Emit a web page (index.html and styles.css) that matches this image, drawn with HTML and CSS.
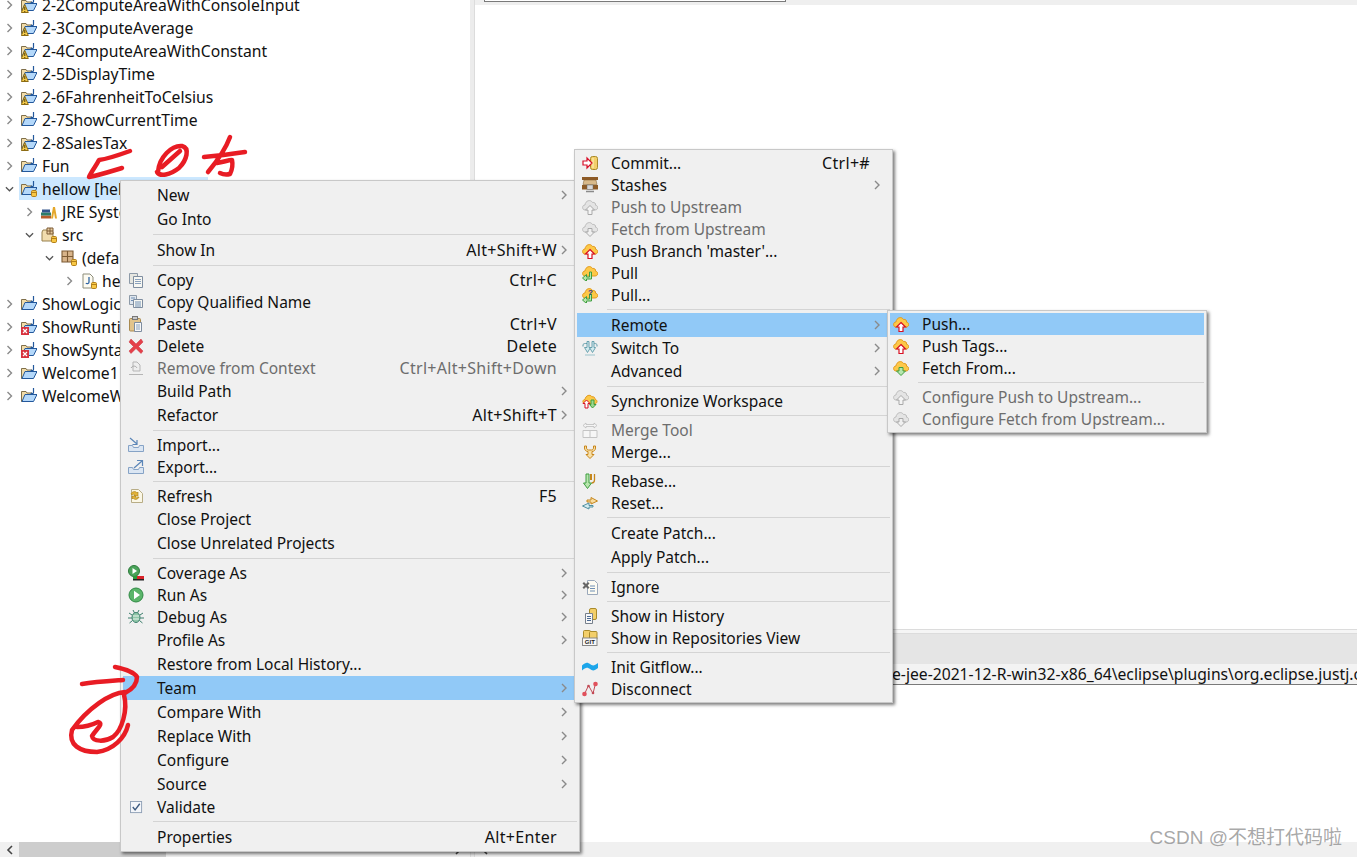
FILE: index.html
```html
<!DOCTYPE html>
<html lang="en">
<head>
<meta charset="utf-8">
<title>Eclipse Team menu</title>
<link rel="stylesheet" href="styles.css">
</head>
<body>
<svg class="sprite" width="0" height="0">
  <defs>
    <symbol id="chev-r" viewBox="0 0 8 10"><path d="M2 1l4 4-4 4" fill="none" stroke="#8a8a8a" stroke-width="1.4"/></symbol>
    <symbol id="chev-d" viewBox="0 0 10 8"><path d="M1 2l4 4 4-4" fill="none" stroke="#555" stroke-width="1.4"/></symbol>
    <symbol id="chev-k" viewBox="0 0 8 10"><path d="M6 1 2 5l4 4" fill="none" stroke="#444" stroke-width="1.6"/></symbol>
    <symbol id="chev-kr" viewBox="0 0 8 10"><path d="M2 1l4 4-4 4" fill="none" stroke="#444" stroke-width="1.6"/></symbol>
    <symbol id="proj" viewBox="0 0 16 16">
      <path d="M.5 3.500V13.500H11V5H6L5 3.500z" fill="#f2dca8" stroke="#7f6f4a"/>
      <path d="M1 13.500 4 6.500H16L12.500 13.500z" fill="#b4d8fa" stroke="#23589c"/>
      <path d="M12.500 0v4.500c0 1.300-2 1.300-2.800.5" fill="none" stroke="#23589c" stroke-width="1.200"/>
    </symbol>
    <symbol id="warn" viewBox="0 0 16 16"><path d="M.3 15.500 3.800 7.500 7.300 15.500z" fill="#f6cc4c" stroke="#8d6c14"/><path d="M3.800 10v3M3.800 14v1" stroke="#4a3a08"/></symbol>
    <symbol id="err" viewBox="0 0 16 16"><rect x="0" y="8" width="8" height="8" fill="#d8333f"/><path d="M2 10l4 4M6 10l-4 4" stroke="#fff" stroke-width="1.2"/></symbol>
    <symbol id="repo" viewBox="0 0 16 16"><rect x="10.500" y="9.500" width="5" height="6" rx="1.200" fill="#f8c846" stroke="#b3801a"/><path d="M10.500 11.500h5" stroke="#b3801a"/></symbol>
    <symbol id="jre" viewBox="0 0 16 16"><rect x="0" y="11.500" width="10" height="3" fill="#b65c2c"/><rect x="0" y="8.500" width="10" height="3" fill="#2d7d6a"/><rect x="1" y="5.500" width="8" height="3" fill="#33558c"/><path d="M10 14.500 12 3h2l2 11.500h-2l-1-6-1 6z" fill="#e4a72a"/></symbol>
    <symbol id="srcf" viewBox="0 0 16 16"><path d="M1 5v9h11V5H7L6 3H2z" fill="#f1dcae" stroke="#98814f"/><path d="M6 1h6v6H6zM9 1v6M6 4h6" fill="#e8cda0" stroke="#7d5b34"/></symbol>
    <symbol id="pkg" viewBox="0 0 16 16"><path d="M1 1h11v11H1zM6.500 1v11M1 6.500h11" fill="#d8b48a" stroke="#7d5b34" stroke-width="1.1"/></symbol>
    <symbol id="jfile" viewBox="0 0 16 16"><path d="M2 1h7l3 3v11H2z" fill="#fdfbf2" stroke="#8d8d7a"/><path d="M8 4v5c0 2-2.500 2-3 1" fill="none" stroke="#2f64a3" stroke-width="1.3"/></symbol>

    <symbol id="copy" viewBox="0 0 16 16"><path d="M1.500 1.500h8v10h-8z" fill="#e6e6e0" stroke="#8d9aa8"/><path d="M5.500 4.500h9v11h-9z" fill="#f7f7f2" stroke="#7e8da0"/><path d="M7 7.500h6M7 9.500h6M7 11.500h6" stroke="#8aa1bd"/></symbol>
    <symbol id="copyq" viewBox="0 0 16 16"><path d="M1.500 1.500h7v9h-7z" fill="#dfe6ee" stroke="#8d9aa8"/><path d="M5.500 5.500h9v8h-9z" fill="#f7f7f2" stroke="#7e8da0"/><path d="M3 4h4M3 6.500h2M7 8h6M7 10h6M7 12h6" stroke="#6f8fb5"/></symbol>
    <symbol id="paste" viewBox="0 0 16 16"><rect x="1.500" y="2.500" width="11" height="12.500" rx="1" fill="#e2c48c" stroke="#a98a50"/><rect x="4.500" y=".5" width="5" height="3" fill="#c9c9c9" stroke="#777"/><path d="M6.500 6.500h7v9h-7z" fill="#f8f8f8" stroke="#7e8da0"/><path d="M8 9h4M8 11h4M8 13h4" stroke="#8aa1bd"/></symbol>
    <symbol id="del" viewBox="0 0 16 16"><path d="M3 1 8 6l5-5 2 3-4.500 4.500L15 13l-2 2.500-5-5-5 5L1 13l4.500-4.500L1 4z" fill="#e5404a" stroke="#c9303c" stroke-width=".5"/></symbol>
    <symbol id="rmctx" viewBox="0 0 16 16"><path d="M1 14.500h14" stroke="#b5b5b5"/><path d="M5 2h4l3 3v6H5z" fill="#eee" stroke="#b5b5b5"/><path d="M3 8c2-3 5-2 6 0" fill="none" stroke="#a8a8a8"/></symbol>
    <symbol id="imp" viewBox="0 0 16 16"><path d="M.5 8.500h4l1 2h5l1-2h4v6H.5z" fill="#dbe6f3" stroke="#86a3c6"/><path d="M2 1l7 6M9 3v4.500H4.500" fill="none" stroke="#5b86b8" stroke-width="1.2"/></symbol>
    <symbol id="exp" viewBox="0 0 16 16"><path d="M.5 8.500h4l1 2h5l1-2h4v6H.5z" fill="#dbe6f3" stroke="#86a3c6"/><path d="M6 9l8-7M9 1.500h5.500V7" fill="none" stroke="#5b86b8" stroke-width="1.2"/></symbol>
    <symbol id="refresh" viewBox="0 0 16 16"><path d="M3.500 1.500h7l4 4v9h-11z" fill="#fbf7e6" stroke="#b8ad86"/><path d="M3 6c1-3 5-3 6-1l1-1v4H6l1-1c-1-1-2-1-3 0z" fill="#e3b338" stroke="#a67d14" stroke-width=".6"/><path d="M11 9c-1 3-5 3-6 1l-1 1V8h4l-1 1c1 1 2 1 3 0z" fill="#e3b338" stroke="#a67d14" stroke-width=".6"/></symbol>
    <symbol id="cover" viewBox="0 0 16 16"><circle cx="6" cy="6" r="5.500" fill="#4aa35a" stroke="#2c7a3b"/><path d="M4.500 3v6l4.500-3z" fill="#fff"/><rect x="9" y="11" width="7" height="4" fill="#d8232a"/><rect x="5" y="11" width="4" height="4" fill="#2c9a3b"/><rect x="5" y="14" width="11" height="1.500" fill="#222"/></symbol>
    <symbol id="run" viewBox="0 0 16 16"><circle cx="8" cy="8" r="7" fill="#5bb56a" stroke="#2f8a44"/><path d="M6 3.800v8.400L12 8z" fill="#fff"/></symbol>
    <symbol id="debug" viewBox="0 0 16 16"><ellipse cx="8" cy="8.500" rx="4" ry="5" fill="#8fc7a8" stroke="#3c7f6c"/><path d="M1 4l3 2M15 4l-3 2M0 9h4M16 9h-4M1.500 14l3-2.500M14.500 14l-3-2.500M5 1l1.500 3M11 1 9.500 4" stroke="#3c7f6c"/><path d="M5 7h6M5 10h6" stroke="#e8f2ec"/></symbol>
    <symbol id="check" viewBox="0 0 14 14"><rect x=".5" y=".5" width="12" height="12" fill="#f4f6fa" stroke="#8f9fb5"/><path d="M3 6.500 5.500 9.500 10.500 3" fill="none" stroke="#3d5a80" stroke-width="1.500"/></symbol>

    <symbol id="commit" viewBox="0 0 16 16"><rect x="8.500" y="1.500" width="7" height="13" rx="2" fill="#f3cf6a" stroke="#a98a2a"/><path d="M11 3v10" stroke="#fff3c0"/><path d="M1 6h4V3l5 5-5 5v-3H1z" fill="#fff" stroke="#d8102a" stroke-width="1.200"/></symbol>
    <symbol id="stash" viewBox="0 0 16 16"><path d="M0 0h16v3H0z" fill="#8d5a26"/><path d="M2 3h12l1 4.500H1z" fill="#d8b98a" stroke="#7d5a2a" stroke-width=".5"/><path d="M0 8h16v4.500H0z" fill="#8d5a26"/><rect x="5" y="8" width="6" height="4.500" fill="#d8d8d8" stroke="#666" stroke-width=".5"/><path d="M4 14.500h8" stroke="#8a8a8a" stroke-width="1.500"/></symbol>
    <symbol id="cloud" viewBox="0 0 16 16"><path d="M3 11C-.2 11-.2 6 3 6 3.500 1.500 8.500 0 10.500 3.500 12.500 3 14 4.500 13.500 6.200 16.500 6.500 16.500 11 13 11z" fill="#fdc848" stroke="#e39a1c"/></symbol>
    <symbol id="cloudg" viewBox="0 0 16 16"><path d="M3 11C-.2 11-.2 6 3 6 3.500 1.500 8.500 0 10.500 3.500 12.500 3 14 4.500 13.500 6.200 16.500 6.500 16.500 11 13 11z" fill="#e4e4e4" stroke="#bdbdbd"/></symbol>
    <symbol id="upr" viewBox="0 0 16 16"><path d="M8 6.500 12.500 11H10v4.500H6V11H3.500z" fill="#fff" stroke="#d70f22" stroke-width="1.200"/></symbol>
    <symbol id="upg" viewBox="0 0 16 16"><path d="M8 6.500 12.500 11H10v4.500H6V11H3.500z" fill="#f4f4f4" stroke="#a9a9a9"/></symbol>
    <symbol id="dng" viewBox="0 0 16 16"><path d="M6 7.500h4V11h2.500L8 15.500 3.500 11H6z" fill="#b8e6ae" stroke="#3f9e40"/></symbol>
    <symbol id="dnx" viewBox="0 0 16 16"><path d="M6 7.500h4V11h2.500L8 15.500 3.500 11H6z" fill="#f0f0f0" stroke="#a9a9a9"/></symbol>
    <symbol id="pull" viewBox="0 0 16 16"><path d="M7.500 7v5H4.500V9.500L.5 13l4 3.500V14H9.500V7z" fill="#b8e6ae" stroke="#3f9e40"/></symbol>
    <symbol id="qm" viewBox="0 0 16 16"><text x="8.500" y="7.500" class="qtext">?</text></symbol>
    <symbol id="switch" viewBox="0 0 16 16"><path d="M5 1.500h2v6h1.500L5.500 12.500 2.500 7.500H5z" fill="#d5ecf0" stroke="#5f9aa8" stroke-width=".9"/><path d="M10 1.500h2v6h1.500l-3 5-3-5H10z" fill="#d5ecf0" stroke="#5f9aa8" stroke-width=".9"/><path d="M1 6.500V5C1 4 2 3.500 3.500 3.500H5M15 6.500V5c0-1-1-1.500-2.500-1.500H12" fill="none" stroke="#5f9aa8"/><path d="M3 15h10" stroke="#9cc4cc"/></symbol>
    <symbol id="sync" viewBox="0 0 16 16"><path d="M3 10.500C.2 10.500.2 6.500 3 6.500 3.500 2.500 8 .8 10 3.800c2-.5 3.300 1 3 2.700 2.700 0 2.700 4 0 4z" fill="#fdc848" stroke="#e39a1c"/><path d="M4.500 7 8 10.500H6V15H3v-4.500H1z" fill="#fff" stroke="#d70f22"/><path d="M9 7h3v4.500h2L10.500 15 7.500 11.500H9z" fill="#9bd890" stroke="#3f9e40"/></symbol>
    <symbol id="mtool" viewBox="0 0 16 16"><path d="M1 8.500h14v7H1zM8 8.500v7" fill="#f6f6f6" stroke="#c4c4c4"/><path d="M1 3.500 4 1v1.500h8V1l3 2.500L12 6V4.500H4V6z" fill="#f4f4f4" stroke="#bcbcbc" stroke-width=".8"/></symbol>
    <symbol id="merge" viewBox="0 0 16 16"><path d="M2.500 2h2v2c0 1 1 2 2 2h3c1 0 2-1 2-2V2h2v2c0 2-1.500 3.500-3.500 3.500v3H12L8 14.500 4 10.500h2V7.500C4 7.500 2.500 6 2.500 4z" fill="#f8e0a8" stroke="#c8861a"/></symbol>
    <symbol id="rebase" viewBox="0 0 16 16"><path d="M9 1v6" stroke="#c5861c" stroke-width="2"/><path d="M12.500 1v6c0 2.500-1.500 3-3 3" fill="none" stroke="#c5861c" stroke-width="1.300"/><path d="M4 1h3v9h2.500L5.500 15.500 1.500 10H4z" fill="#b8e6ae" stroke="#3f9e40"/></symbol>
    <symbol id="reset" viewBox="0 0 16 16"><path d="M9 5V2.500L15.500 6 9 9V7H5V5z" fill="#f8dca0" stroke="#c5861c"/><path d="M7 8v2.500h4V12H7v2L.5 11 7 8z" fill="#d5ecf0" stroke="#4f8fa0"/></symbol>
    <symbol id="ignore" viewBox="0 0 16 16"><path d="M5.500 1.500h7l3 3v11h-10z" fill="#fdfbf2" stroke="#9aa8bb"/><path d="M8 7h5M8 9.500h5M8 12h5" stroke="#6f8fb5"/><path d="M2 3l2 2 2-2 1.500 1.500-2 2 2 2L6 10 4 8l-2 2L.5 8.500l2-2-2-2z" fill="#666"/></symbol>
    <symbol id="hist" viewBox="0 0 16 16"><rect x="7.500" y=".5" width="7" height="11" rx="1.500" fill="#f3cf6a" stroke="#a98a2a"/><path d="M3.500 5.500h7v10h-7z" fill="#f8f8f8" stroke="#77808c"/><path d="M5 8.500h4M5 10.500h4M5 12.500h4" stroke="#4c6a94"/></symbol>
    <symbol id="gitv" viewBox="0 0 16 16"><rect x="1.500" y=".5" width="7" height="8" rx="1" fill="#f3cf6a" stroke="#a98a2a"/><rect x="7.500" y="1.500" width="7.500" height="8" rx="1" fill="#f3cf6a" stroke="#a98a2a"/><rect x=".5" y="8" width="14.500" height="7.500" fill="#f8f8f8" stroke="#888"/><text x="7.800" y="14.300" class="gittext">GIT</text></symbol>
    <symbol id="flow" viewBox="0 0 16 16"><path d="M0 11.500V6.500c4-4 6-3 8-1.500s4 2.500 8-1v5c-4 3.500-6 2.500-8 1S4 7.500 0 11.500z" fill="#1da6ea"/></symbol>
    <symbol id="disc" viewBox="0 0 16 16"><path d="M2.500 13 6.500 4.500l4.500 8 2.500-10" fill="none" stroke="#c24a55"/><circle cx="2.500" cy="13" r="2.300" fill="#e1515c"/><circle cx="13.500" cy="3" r="2.300" fill="#e1515c"/><circle cx="6.500" cy="5" r="1.300" fill="#c24a55"/><circle cx="11" cy="12" r="1.300" fill="#c24a55"/></symbol>
  </defs>
</svg>

<div class="app">
  <div class="workspace">
    <div class="navigator">
      <ul class="tree">
        <li class="node"><svg class="twist"><use href="#chev-r"/></svg><svg class="ti"><use href="#proj"/><use href="#warn"/></svg><span>2-2ComputeAreaWithConsoleInput</span></li>
        <li class="node"><svg class="twist"><use href="#chev-r"/></svg><svg class="ti"><use href="#proj"/><use href="#warn"/></svg><span>2-3ComputeAverage</span></li>
        <li class="node"><svg class="twist"><use href="#chev-r"/></svg><svg class="ti"><use href="#proj"/><use href="#warn"/></svg><span>2-4ComputeAreaWithConstant</span></li>
        <li class="node"><svg class="twist"><use href="#chev-r"/></svg><svg class="ti"><use href="#proj"/><use href="#warn"/></svg><span>2-5DisplayTime</span></li>
        <li class="node"><svg class="twist"><use href="#chev-r"/></svg><svg class="ti"><use href="#proj"/><use href="#warn"/></svg><span>2-6FahrenheitToCelsius</span></li>
        <li class="node"><svg class="twist"><use href="#chev-r"/></svg><svg class="ti"><use href="#proj"/></svg><span>2-7ShowCurrentTime</span></li>
        <li class="node"><svg class="twist"><use href="#chev-r"/></svg><svg class="ti"><use href="#proj"/><use href="#warn"/></svg><span>2-8SalesTax</span></li>
        <li class="node"><svg class="twist"><use href="#chev-r"/></svg><svg class="ti"><use href="#proj"/></svg><span>Fun</span></li>
        <li class="node selected"><svg class="twist"><use href="#chev-d"/></svg><svg class="ti"><use href="#proj"/><use href="#repo"/></svg><span>hellow [hellow master]</span></li>
        <li class="node lv1"><svg class="twist"><use href="#chev-r"/></svg><svg class="ti"><use href="#jre"/></svg><span>JRE System Library</span></li>
        <li class="node lv1"><svg class="twist"><use href="#chev-d"/></svg><svg class="ti"><use href="#srcf"/><use href="#repo"/></svg><span>src</span></li>
        <li class="node lv2"><svg class="twist"><use href="#chev-d"/></svg><svg class="ti"><use href="#pkg"/><use href="#repo"/></svg><span>(default package)</span></li>
        <li class="node lv3"><svg class="twist"><use href="#chev-r"/></svg><svg class="ti"><use href="#jfile"/><use href="#repo"/></svg><span>hellow.java</span></li>
        <li class="node"><svg class="twist"><use href="#chev-r"/></svg><svg class="ti"><use href="#proj"/></svg><span>ShowLogicError</span></li>
        <li class="node"><svg class="twist"><use href="#chev-r"/></svg><svg class="ti"><use href="#proj"/><use href="#err"/></svg><span>ShowRuntimeError</span></li>
        <li class="node"><svg class="twist"><use href="#chev-r"/></svg><svg class="ti"><use href="#proj"/><use href="#err"/></svg><span>ShowSyntaxError</span></li>
        <li class="node"><svg class="twist"><use href="#chev-r"/></svg><svg class="ti"><use href="#proj"/></svg><span>Welcome1</span></li>
        <li class="node"><svg class="twist"><use href="#chev-r"/></svg><svg class="ti"><use href="#proj"/></svg><span>WelcomeWithThreeMessages</span></li>
      </ul>
    </div>
    <div class="sash"></div>
    <div class="editor">
      <div class="tabstrip"><div class="tabbox"></div></div>
      <div class="editor-body"></div>
      <div class="console">
        <div class="console-gap"></div>
        <div class="console-head"></div>
        <div class="console-line">e-jee-2021-12-R-win32-x86_64\eclipse\plugins\org.eclipse.justj.openjdk.hotspot.jre.full.win32.x86_64</div>
        <div class="console-rest"></div>
      </div>
    </div>
  </div>
  <div class="hbar">
    <div class="hbtn"><svg class="hchev"><use href="#chev-k"/></svg></div>
    <div class="hthumb"></div>
    <div class="hright"><svg class="hchev"><use href="#chev-kr"/></svg></div>
    <div class="hsash"></div>
    <div class="hbtn"><svg class="hchev"><use href="#chev-k"/></svg></div>
  </div>
</div>

<div class="menu menu-main">
  <div class="item tall"><span class="gut"></span><span class="label">New</span><span class="end"><svg class="chev"><use href="#chev-r"/></svg></span></div>
  <div class="item tall"><span class="gut"></span><span class="label">Go Into</span><span class="end"></span></div>
  <div class="sep"></div>
  <div class="item tall"><span class="gut"></span><span class="label">Show In</span><span class="key">Alt+Shift+W</span><span class="end"><svg class="chev"><use href="#chev-r"/></svg></span></div>
  <div class="sep"></div>
  <div class="item"><span class="gut"><svg class="mi"><use href="#copy"/></svg></span><span class="label">Copy</span><span class="key">Ctrl+C</span><span class="end"></span></div>
  <div class="item"><span class="gut"><svg class="mi"><use href="#copyq"/></svg></span><span class="label">Copy Qualified Name</span><span class="end"></span></div>
  <div class="item"><span class="gut"><svg class="mi"><use href="#paste"/></svg></span><span class="label">Paste</span><span class="key">Ctrl+V</span><span class="end"></span></div>
  <div class="item"><span class="gut"><svg class="mi"><use href="#del"/></svg></span><span class="label">Delete</span><span class="key">Delete</span><span class="end"></span></div>
  <div class="item off"><span class="gut"><svg class="mi"><use href="#rmctx"/></svg></span><span class="label">Remove from Context</span><span class="key">Ctrl+Alt+Shift+Down</span><span class="end"></span></div>
  <div class="item tall"><span class="gut"></span><span class="label">Build Path</span><span class="end"><svg class="chev"><use href="#chev-r"/></svg></span></div>
  <div class="item tall"><span class="gut"></span><span class="label">Refactor</span><span class="key">Alt+Shift+T</span><span class="end"><svg class="chev"><use href="#chev-r"/></svg></span></div>
  <div class="sep"></div>
  <div class="item"><span class="gut"><svg class="mi"><use href="#imp"/></svg></span><span class="label">Import...</span><span class="end"></span></div>
  <div class="item"><span class="gut"><svg class="mi"><use href="#exp"/></svg></span><span class="label">Export...</span><span class="end"></span></div>
  <div class="sep"></div>
  <div class="item"><span class="gut"><svg class="mi"><use href="#refresh"/></svg></span><span class="label">Refresh</span><span class="key">F5</span><span class="end"></span></div>
  <div class="item tall"><span class="gut"></span><span class="label">Close Project</span><span class="end"></span></div>
  <div class="item tall"><span class="gut"></span><span class="label">Close Unrelated Projects</span><span class="end"></span></div>
  <div class="sep"></div>
  <div class="item"><span class="gut"><svg class="mi"><use href="#cover"/></svg></span><span class="label">Coverage As</span><span class="end"><svg class="chev"><use href="#chev-r"/></svg></span></div>
  <div class="item"><span class="gut"><svg class="mi"><use href="#run"/></svg></span><span class="label">Run As</span><span class="end"><svg class="chev"><use href="#chev-r"/></svg></span></div>
  <div class="item"><span class="gut"><svg class="mi"><use href="#debug"/></svg></span><span class="label">Debug As</span><span class="end"><svg class="chev"><use href="#chev-r"/></svg></span></div>
  <div class="item tall"><span class="gut"></span><span class="label">Profile As</span><span class="end"><svg class="chev"><use href="#chev-r"/></svg></span></div>
  <div class="item tall"><span class="gut"></span><span class="label">Restore from Local History...</span><span class="end"></span></div>
  <div class="item tall hot"><span class="gut"></span><span class="label">Team</span><span class="end"><svg class="chev"><use href="#chev-r"/></svg></span></div>
  <div class="item tall"><span class="gut"></span><span class="label">Compare With</span><span class="end"><svg class="chev"><use href="#chev-r"/></svg></span></div>
  <div class="item tall"><span class="gut"></span><span class="label">Replace With</span><span class="end"><svg class="chev"><use href="#chev-r"/></svg></span></div>
  <div class="item tall"><span class="gut"></span><span class="label">Configure</span><span class="end"><svg class="chev"><use href="#chev-r"/></svg></span></div>
  <div class="item tall"><span class="gut"></span><span class="label">Source</span><span class="end"><svg class="chev"><use href="#chev-r"/></svg></span></div>
  <div class="item"><span class="gut"><svg class="mi check"><use href="#check"/></svg></span><span class="label">Validate</span><span class="end"></span></div>
  <div class="sep"></div>
  <div class="item tall"><span class="gut"></span><span class="label">Properties</span><span class="key">Alt+Enter</span><span class="end"></span></div>
</div>

<div class="menu menu-team">
  <div class="item"><span class="gut"><svg class="mi"><use href="#commit"/></svg></span><span class="label">Commit...</span><span class="key">Ctrl+#</span><span class="end"></span></div>
  <div class="item"><span class="gut"><svg class="mi"><use href="#stash"/></svg></span><span class="label">Stashes</span><span class="end"><svg class="chev"><use href="#chev-r"/></svg></span></div>
  <div class="item off"><span class="gut"><svg class="mi"><use href="#cloudg"/><use href="#upg"/></svg></span><span class="label">Push to Upstream</span><span class="end"></span></div>
  <div class="item off"><span class="gut"><svg class="mi"><use href="#cloudg"/><use href="#dnx"/></svg></span><span class="label">Fetch from Upstream</span><span class="end"></span></div>
  <div class="item"><span class="gut"><svg class="mi"><use href="#cloud"/><use href="#upr"/></svg></span><span class="label">Push Branch 'master'...</span><span class="end"></span></div>
  <div class="item"><span class="gut"><svg class="mi"><use href="#cloud"/><use href="#pull"/></svg></span><span class="label">Pull</span><span class="end"></span></div>
  <div class="item"><span class="gut"><svg class="mi"><use href="#cloud"/><use href="#pull"/><use href="#qm"/></svg></span><span class="label">Pull...</span><span class="end"></span></div>
  <div class="sep"></div>
  <div class="item tall hot"><span class="gut"></span><span class="label">Remote</span><span class="end"><svg class="chev"><use href="#chev-r"/></svg></span></div>
  <div class="item"><span class="gut"><svg class="mi"><use href="#switch"/></svg></span><span class="label">Switch To</span><span class="end"><svg class="chev"><use href="#chev-r"/></svg></span></div>
  <div class="item tall"><span class="gut"></span><span class="label">Advanced</span><span class="end"><svg class="chev"><use href="#chev-r"/></svg></span></div>
  <div class="sep"></div>
  <div class="item"><span class="gut"><svg class="mi"><use href="#sync"/></svg></span><span class="label">Synchronize Workspace</span><span class="end"></span></div>
  <div class="sep"></div>
  <div class="item off"><span class="gut"><svg class="mi"><use href="#mtool"/></svg></span><span class="label">Merge Tool</span><span class="end"></span></div>
  <div class="item"><span class="gut"><svg class="mi"><use href="#merge"/></svg></span><span class="label">Merge...</span><span class="end"></span></div>
  <div class="sep"></div>
  <div class="item"><span class="gut"><svg class="mi"><use href="#rebase"/></svg></span><span class="label">Rebase...</span><span class="end"></span></div>
  <div class="item"><span class="gut"><svg class="mi"><use href="#reset"/></svg></span><span class="label">Reset...</span><span class="end"></span></div>
  <div class="sep"></div>
  <div class="item tall"><span class="gut"></span><span class="label">Create Patch...</span><span class="end"></span></div>
  <div class="item tall"><span class="gut"></span><span class="label">Apply Patch...</span><span class="end"></span></div>
  <div class="sep"></div>
  <div class="item"><span class="gut"><svg class="mi"><use href="#ignore"/></svg></span><span class="label">Ignore</span><span class="end"></span></div>
  <div class="sep"></div>
  <div class="item"><span class="gut"><svg class="mi"><use href="#hist"/></svg></span><span class="label">Show in History</span><span class="end"></span></div>
  <div class="item"><span class="gut"><svg class="mi"><use href="#gitv"/></svg></span><span class="label">Show in Repositories View</span><span class="end"></span></div>
  <div class="sep"></div>
  <div class="item"><span class="gut"><svg class="mi"><use href="#flow"/></svg></span><span class="label">Init Gitflow...</span><span class="end"></span></div>
  <div class="item"><span class="gut"><svg class="mi"><use href="#disc"/></svg></span><span class="label">Disconnect</span><span class="end"></span></div>
</div>

<div class="menu menu-remote">
  <div class="item hot"><span class="gut"><svg class="mi"><use href="#cloud"/><use href="#upr"/></svg></span><span class="label">Push...</span><span class="end"></span></div>
  <div class="item"><span class="gut"><svg class="mi"><use href="#cloud"/><use href="#upr"/></svg></span><span class="label">Push Tags...</span><span class="end"></span></div>
  <div class="item"><span class="gut"><svg class="mi"><use href="#cloud"/><use href="#dng"/></svg></span><span class="label">Fetch From...</span><span class="end"></span></div>
  <div class="sep"></div>
  <div class="item off"><span class="gut"><svg class="mi"><use href="#cloudg"/><use href="#upg"/></svg></span><span class="label">Configure Push to Upstream...</span><span class="end"></span></div>
  <div class="item off"><span class="gut"><svg class="mi"><use href="#cloudg"/><use href="#dnx"/></svg></span><span class="label">Configure Fetch from Upstream...</span><span class="end"></span></div>
</div>

<svg class="ink" viewBox="0 0 1357 857">
  <path d="M130 151C119 155 107 159 99 160C96 166 91 172 89 177C100 175 112 171 122 168"/>
  <path d="M158 172C159 157 172 145 182 146C190 148 187 160 179 168C170 175 160 177 157 172M162 167L180 151"/>
  <path d="M204 157C216 156 232 154 245 152M230 137C226 148 218 160 208 172M217 163C224 162 228 160 232 160C233 165 232 170 230 174C226 175 222 174 220 173"/>
  <path d="M82 684C95 682 110 681 123 680M115 667C125 669 134 672 137 677C137 685 131 690 125 693"/>
  <path d="M125 692C110 693 88 708 72 730C68 745 80 752 97 752C113 750 125 738 128 725M124 695C128 710 122 730 113 737C105 742 93 742 92 736C97 728 104 724 98 722C90 726 82 727 77 727"/>
</svg>

<div class="watermark">CSDN @不想打代码啦</div>
</body>
</html>
```
FILE: styles.css
```css
* { box-sizing: border-box; }

html, body {
  margin: 0;
  padding: 0;
  height: 857px;
  overflow: hidden;
  background: #fff;
}

body {
  font-family: "Noto Sans", "Open Sans", "Liberation Sans", sans-serif;
  font-size: 15.5px;
  color: #111;
}

.sprite { position: absolute; }

.gittext {
  font-family: "Liberation Sans", sans-serif;
  font-size: 6px;
  font-weight: 700;
  text-anchor: middle;
  fill: #222;
}

.qtext {
  font-family: "Liberation Sans", sans-serif;
  font-size: 8px;
  font-weight: 700;
  text-anchor: middle;
  fill: #2a2a9a;
}

.app {
  display: flex;
  flex-direction: column;
  height: 857px;
  overflow: hidden;
}

.workspace {
  display: flex;
  flex: 1;
  min-height: 0;
}

.navigator {
  width: 470px;
  overflow: hidden;
}

.tree {
  list-style: none;
  margin: -7px 0 0;
  padding: 0;
  font-size: 15.7px;
}

.node {
  display: flex;
  align-items: center;
  height: 23px;
  padding-left: 5px;
  white-space: nowrap;
}

.node.lv1 { padding-left: 25px; }
.node.lv2 { padding-left: 45px; }
.node.lv3 { padding-left: 65px; }

.node.selected {
  background: linear-gradient(#cce8ff, #cce8ff) 19px 0 / 189px 100% no-repeat;
}

.twist {
  width: 9px;
  height: 10px;
  margin-right: 7px;
  flex: none;
}

.ti {
  width: 16px;
  height: 16px;
  margin-right: 5px;
  flex: none;
}

.sash {
  width: 5px;
  background: #ececec;
  border-right: 1px solid #dcdcdc;
}

.editor {
  flex: 1;
  display: flex;
  flex-direction: column;
  min-width: 0;
}

.tabstrip {
  height: 5px;
  background: #efefef;
  padding-left: 9px;
}

.tabbox {
  width: 302px;
  height: 2px;
  background: #fff;
  border: 1px solid #7a7a7a;
  border-top: 0;
}

.editor-body { flex: 1; }

.console {
  height: 213px;
  display: flex;
  flex-direction: column;
}

.console-gap {
  height: 5px;
  border-top: 1px solid #dcdcdc;
  border-bottom: 1px solid #dcdcdc;
  background: #f5f5f5;
}

.console-head {
  height: 30px;
  background: #e5e5e5;
}

.console-line {
  height: 21px;
  line-height: 20px;
  padding-left: 417px;
  font-size: 15.7px;
  background: #f3f3f3;
  border-bottom: 1px solid #7a7a7a;
  white-space: nowrap;
  overflow: hidden;
}

.console-rest { flex: 1; }

.hbar {
  display: flex;
  align-items: stretch;
  height: 15px;
  background: #f0f0f0;
}

.hbtn {
  display: flex;
  align-items: center;
  justify-content: center;
  width: 19px;
  flex: none;
}

.hchev {
  width: 8px;
  height: 10px;
}

.hthumb {
  width: 147px;
  background: #cdcdcd;
  flex: none;
}

.hright {
  display: flex;
  align-items: center;
  justify-content: flex-end;
  width: 304px;
  padding-right: 8px;
  flex: none;
}

.hsash {
  width: 5px;
  background: #ececec;
  border-left: 1px solid #dcdcdc;
  border-right: 1px solid #dcdcdc;
  flex: none;
}

.menu {
  position: absolute;
  padding: 2px;
  background: #f0f0f0;
  border: 1px solid #c8c8c8;
  box-shadow: 2px 2px 3px rgba(0, 0, 0, 0.5);
}

.menu-main {
  left: 120px;
  top: 180px;
  width: 460px;
}

.menu-team {
  left: 574px;
  top: 149px;
  width: 319px;
}

.menu-remote {
  left: 887px;
  top: 310px;
  width: 320px;
}

.item {
  display: flex;
  align-items: center;
  height: 22px;
  white-space: nowrap;
}

.item.tall { height: 24px; }
.item.hot { background: #91c9f7; }
.item.off { color: #6d6d6d; }

.gut {
  display: flex;
  align-items: center;
  width: 34px;
  padding-left: 5px;
  flex: none;
}

.menu-remote .gut {
  width: 32px;
  padding-left: 3px;
}

.menu-remote .sep {
  margin-left: 28px;
}

.mi {
  width: 16px;
  height: 16px;
}

.mi.check {
  width: 13px;
  height: 13px;
  margin-left: 2px;
}

.label { flex: 1; }

.key {
  font-size: 16px;
  letter-spacing: 0.3px;
}

.end {
  display: flex;
  justify-content: flex-end;
  width: 20px;
  padding-right: 9px;
  flex: none;
}

.chev {
  width: 8px;
  height: 10px;
}

.sep {
  height: 1px;
  margin: 3px 0 3px 30px;
  background: #d4d4d4;
}

.ink {
  position: absolute;
  left: 0;
  top: 0;
  width: 1357px;
  height: 857px;
  fill: none;
  stroke: #e81c24;
  stroke-width: 4.5;
  stroke-linecap: round;
  stroke-linejoin: round;
  pointer-events: none;
}

.watermark {
  position: absolute;
  right: 15px;
  top: 826px;
  font-family: "Liberation Sans", "Noto Sans CJK SC", sans-serif;
  font-size: 19px;
  line-height: 24px;
  color: rgba(130, 130, 130, 0.7);
  white-space: nowrap;
}
```
